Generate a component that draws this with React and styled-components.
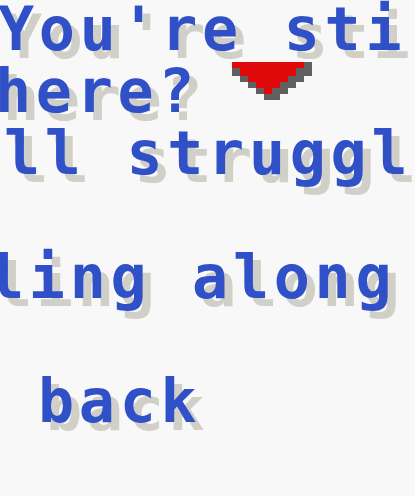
import React from 'react';
import styled, { createGlobalStyle } from 'styled-components';

const GlobalStyle = createGlobalStyle`
  html, body {
    margin: 0;
    padding: 0;
    background: #f8f8f8;
  }
`;

const rows = [
  { y: 0, h: 6, gray: [[72, 80]], red: [0, 72] },
  { y: 6, h: 8, gray: [[0, 8], [64, 80]], red: [8, 64] },
  { y: 14, h: 6, gray: [[8, 16], [56, 72]], red: [16, 56] },
  { y: 20, h: 6, gray: [[16, 24], [48, 64]], red: [24, 48] },
  { y: 26, h: 6, gray: [[24, 32], [40, 56]], red: [32, 40] },
  { y: 32, h: 6, gray: [[32, 48]], red: null },
];

const NextArrow = () => (
  <Arrow width="80" height="38" viewBox="0 0 80 38" shapeRendering="crispEdges">
    {rows.map(r => (
      <g key={r.y}>
        {r.gray.map(([a, b]) => (
          <rect key={a} x={a} y={r.y} width={b - a} height={r.h} fill="#606060" />
        ))}
        {r.red && (
          <rect x={r.red[0]} y={r.y} width={r.red[1] - r.red[0]} height={r.h} fill="#e00808" />
        )}
      </g>
    ))}
  </Arrow>
);

const App = () => {
  return (
    <>
      <GlobalStyle />
      <Screen>
        <Line indent={-2}>You're sti</Line>
        <Line indent={-5}>
          <Word>here?</Word>
          <NextArrow />
        </Line>
        <Line indent={4}>ll struggl</Line>
        <Line indent={-12} gap>ling along</Line>
        <Line indent={38} gap>back</Line>
      </Screen>
    </>
  );
};

export default App;

const Screen = styled.div`
  width: 415px;
  height: 496px;
  overflow: hidden;
  background: #f8f8f8;
  font-family: 'DejaVu Sans Mono', 'Liberation Mono', monospace;
  font-weight: 700;
  font-size: 60px;
  letter-spacing: 4.7px;
  color: #3050c8;
  text-shadow: 8px 8px 0 #d0d0c8;
`;

const Line = styled.div`
  height: 62px;
  line-height: 62px;
  white-space: pre;
  margin-left: ${props => props.indent}px;
  margin-top: ${props => (props.gap ? '62px' : '0')};

  &:first-child {
    margin-top: -2px;
  }
`;

const Word = styled.span`
  display: inline-block;
  width: 237px;
  vertical-align: top;
`;

const Arrow = styled.svg`
  display: inline-block;
  vertical-align: top;
  margin-top: 2px;
`;
